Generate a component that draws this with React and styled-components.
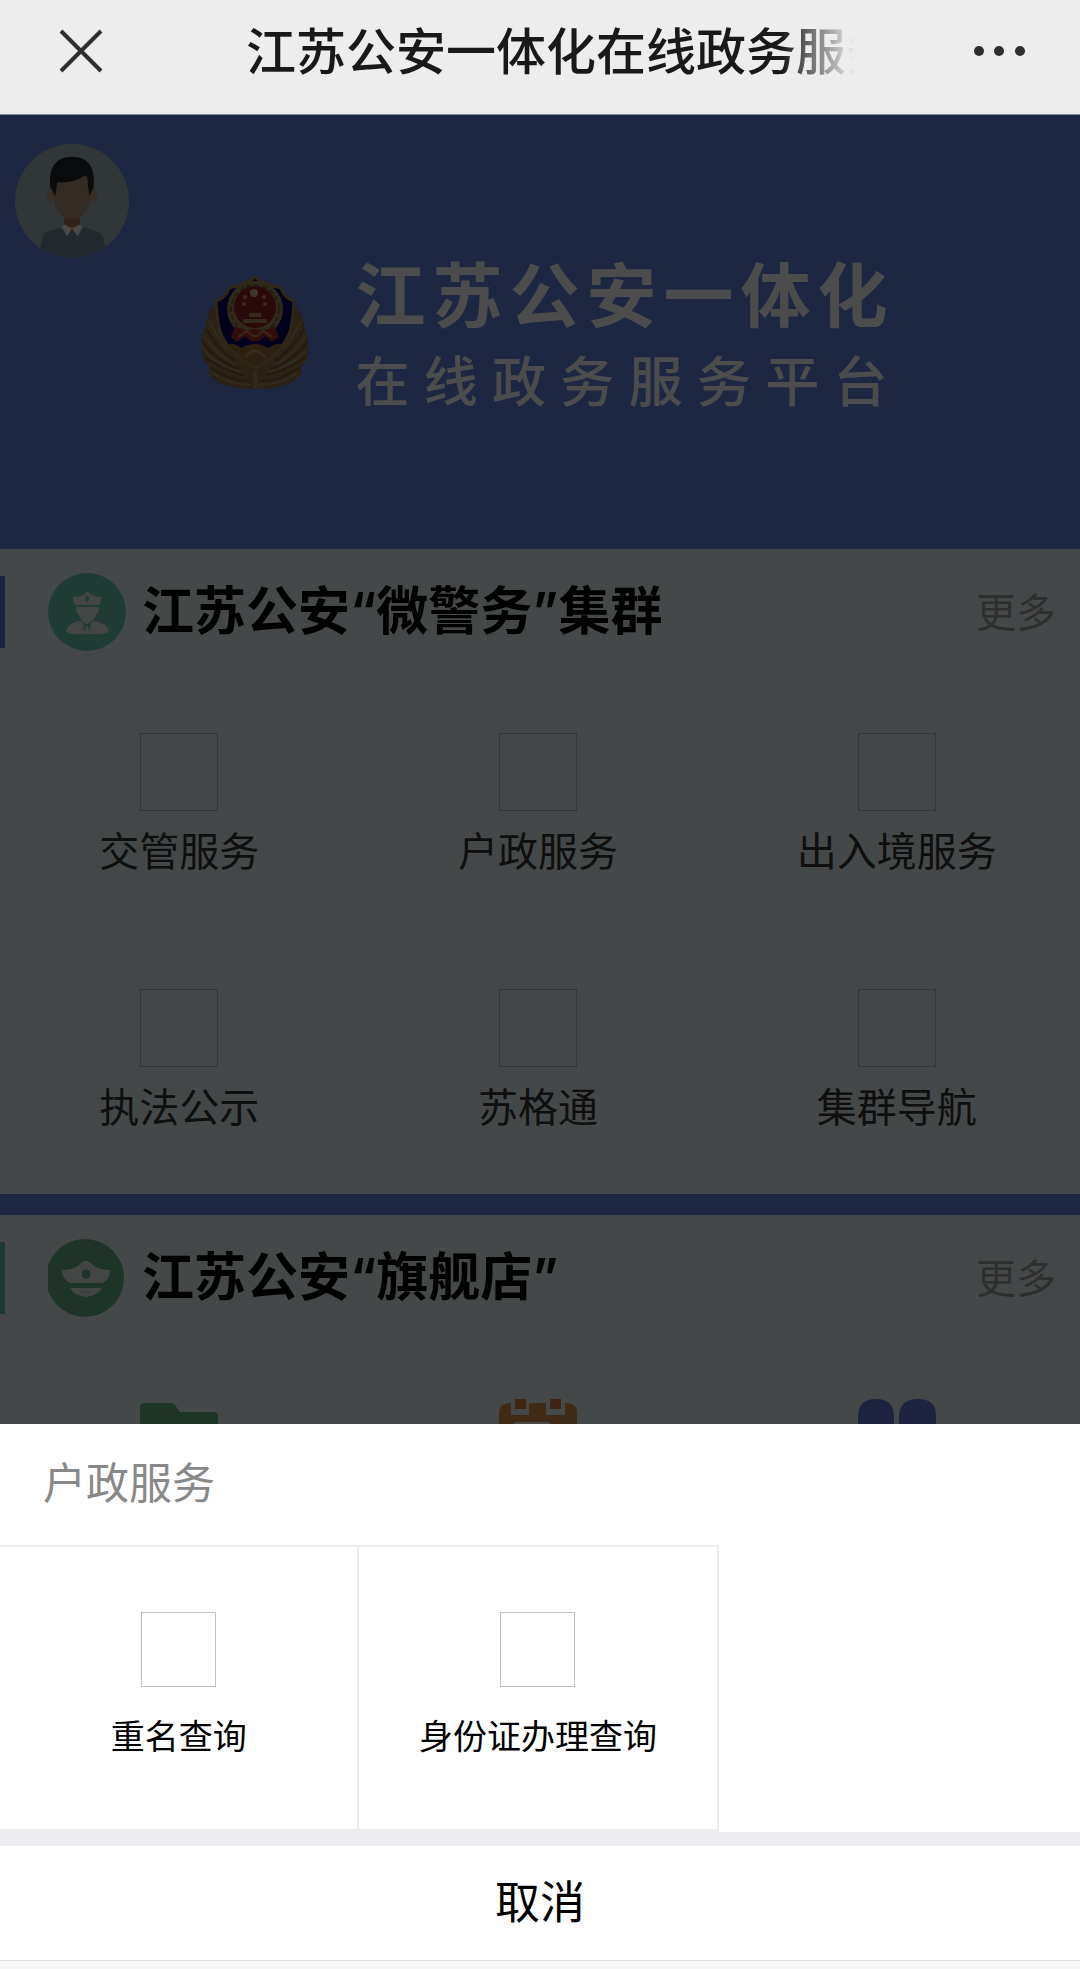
import styled, { createGlobalStyle } from "styled-components";

const clusterItems = ["交管服务", "户政服务", "出入境服务", "执法公示", "苏格通", "集群导航"];

const sheetItems = ["重名查询", "身份证办理查询"];

const CloseIcon = () => (
  <svg width="44" height="44" viewBox="0 0 44 44" fill="none" stroke="#2e2e2e" strokeWidth="4">
    <path d="M2 2 42 42M42 2 2 42" />
  </svg>
);

const DotsIcon = () => (
  <svg width="52" height="12" viewBox="0 0 52 12" fill="#2e2e2e">
    <circle cx="5" cy="6" r="5" />
    <circle cx="25" cy="6" r="5" />
    <circle cx="46" cy="6" r="5" />
  </svg>
);

const AvatarIcon = () => (
  <svg width="116" height="116" viewBox="-1 -1 118 118">
    <defs>
      <clipPath id="avatarClip">
        <circle cx="58" cy="58" r="58" />
      </clipPath>
    </defs>
    <g clipPath="url(#avatarClip)">
      <rect width="116" height="116" fill="#a6b4c0" />
      <path d="M24 116 28 94Q30 89 37 88L50 84H66L81 88Q88 90 90 96L94 116Z" fill="#70889a" />
      <path d="M50 72H66V85L58 90 50 85Z" fill="#a87555" />
      <ellipse cx="37" cy="51" rx="5" ry="8" fill="#b89e86" />
      <ellipse cx="79" cy="51" rx="5" ry="8" fill="#b89e86" />
      <path d="M39 30H77V56Q76 66 69 72 58 81 47 72 40 66 39 56Z" fill="#b0937a" />
      <path d="M36 44C34 26 40 13 58 13S82 26 80 44L76 53 74 42Q75 33 71 32 60 40 43 39L41 53Z" fill="#20262b" />
      <path d="M50 82 58 86 53 94 47 84ZM66 82 58 86 64 94 69 84Z" fill="#f2f2f2" />
    </g>
  </svg>
);

const PoliceEmblem = () => (
  <svg width="108" height="115" viewBox="0 0 108 115">
    <path
      d="M14 30C6 36 6 44 4 52 0 60 0 70 1 78 2 86 6 90 9 92 6 96 8 100 12 104 24 112 38 114 54 114S86 112 96 104C101 100 102 96 99 92 104 90 107 84 107 76 108 66 106 58 103 50 102 42 99 35 92 30L54 2Z"
      fill="#8f7348"
    />
    <g fill="none" stroke="#6c5438" strokeWidth="2">
      <path d="M5 54Q16 74 34 86M2 68Q16 86 38 94M4 82Q20 94 42 100M9 92Q28 106 48 106" />
      <path d="M103 54Q92 74 74 86M106 68Q92 86 70 94M104 82Q88 94 66 100M99 92Q80 106 60 106" />
    </g>
    <g fill="none" stroke="#a88c5e" strokeWidth="2">
      <path d="M8 46Q16 62 26 74M3 61Q16 80 34 90M3 76Q18 92 40 97M12 98Q28 110 50 110" />
      <path d="M100 46Q92 62 82 74M105 61Q92 80 74 90M105 76Q90 92 68 97M96 98Q80 110 58 110" />
      <path d="M54 96V113" strokeWidth="4" />
    </g>
    <path
      d="M54 2C62 9 72 11 80 13 82 20 87 24 93 26 92 38 92 50 88 59 82 74 68 84 54 93 40 84 26 74 20 59 16 50 16 38 15 26 21 24 26 20 28 13 36 11 46 9 54 2Z"
      fill="#00005e"
      stroke="#a08250"
      strokeWidth="3"
    />
    <path
      d="M26 69Q34 68 40 73 48 69 54 69 60 69 68 73 74 68 82 69 72 81 54 92 36 81 26 69Z"
      fill="#8f6c3c"
    />
    <path d="M44 82Q54 70 64 82" fill="none" stroke="#b89258" strokeWidth="3" />
    <circle cx="54" cy="34" r="28" fill="#9c8a58" />
    <circle cx="54" cy="34" r="24" fill="none" stroke="#726036" strokeWidth="2" strokeDasharray="5 3" />
    <circle cx="54" cy="32" r="21" fill="#8c1f26" />
    <path
      d="M34 51Q44 57 54 54 64 57 74 51L78 62 71 67 64 61 58 66H50L44 61 36 67 30 62Z"
      fill="#a02c22"
    />
    <path d="M37 62 46 56 52 61 56 61 62 56 71 62" fill="none" stroke="#b08a50" strokeWidth="2" />
    <path d="M42 44H66V48H42ZM48 38H60V42H48Z" fill="#a09058" />
    <circle cx="53" cy="18" r="4" fill="#d0b890" />
    <circle cx="44" cy="22" r="2" fill="#c09878" />
    <circle cx="63" cy="22" r="2" fill="#c09878" />
    <circle cx="43" cy="29" r="2" fill="#c09878" />
    <circle cx="64" cy="29" r="2" fill="#c09878" />
  </svg>
);

const OfficerIcon = () => (
  <svg width="78" height="78" viewBox="0 0 78 78">
    <circle cx="39" cy="39" r="39" fill="#6cc4b0" />
    <path
      d="M39 18Q42 22 46 23 50 24 53 24 54 27 51 32H28Q24 28 25 24 29 24 33 23 37 22 39 18ZM28 34H51Q51 40 48 42 46 48 40 51H38Q32 47 31 42 28 40 28 34Z"
      fill="#e4e6e8"
    />
    <path d="M39 22Q42 25 41 27L39 29 37 27Q36 25 39 22Z" fill="#6cc4b0" />
    <path d="M18 59C19 52 26 48 33 48L39 54 45 48C53 48 60 52 61 59Q54 62 47 61H32Q24 62 18 59Z" fill="#e4e6e8" />
    <path d="M35 49 39 52 43 49 42 57 39 61 36 57Z" fill="#6cc4b0" />
    <path d="M38 53H40L41 59 39 61 37 59Z" fill="#e4e6e8" />
  </svg>
);

const CapIcon = () => (
  <svg width="78" height="78" viewBox="0 0 78 78">
    <circle cx="37" cy="39" r="39" fill="#65b088" />
    <path
      d="M14 31Q24 31 30 27C34 23 36 22 38 22S42 23 46 27Q52 31 62 31C62 37 59 42 54 44H22C17 42 14 37 14 31Z"
      fill="#e4e6e8"
    />
    <path d="M38 30 42 32V37Q42 39 38 40 34 39 34 37V32Z" fill="#65b088" />
    <path d="M22 49H54Q49 57 38 58 27 57 22 49Z" fill="#e4e6e8" />
    <path d="M32 53 35 54 38 52 41 54 44 52" fill="none" stroke="#9ccfb8" strokeWidth="1" />
  </svg>
);

const FolderIcon = () => (
  <svg width="78" height="78" viewBox="0 0 78 78">
    <path d="M0 9Q0 4 5 4H31Q35 4 37 9L40 13H73Q78 13 78 18V72H0Z" fill="#65b080" />
  </svg>
);

const CalendarIcon = () => (
  <svg width="78" height="78" viewBox="0 0 78 78">
    <path d="M12 4V16H30V4H47V16H66V4Q78 4 78 13V78H0V13Q0 4 12 4Z" fill="#d08c48" />
    <path d="M16 0H27V10H16ZM51 0H62V10H51Z" fill="#d08040" />
    <rect x="14" y="23" width="38" height="42" rx="4" fill="#e6f0f3" />
  </svg>
);

const AppsIcon = () => (
  <svg width="78" height="78" viewBox="0 0 78 78" fill="#6578d4">
    <path d="M0 37V18Q0 0 18 0T36 18V37ZM41 37V18Q41 0 60 0T78 18V37Z" />
    <path d="M0 41H36V60Q36 78 18 78T0 60ZM41 41H78V60Q78 78 60 78T41 60Z" />
  </svg>
);

const App = () => {
  return (
    <Screen>
      <GlobalStyle />

      <NavBar>
        <CloseButton aria-label="关闭">
          <CloseIcon />
        </CloseButton>
        <NavTitle>江苏公安一体化在线政务服务</NavTitle>
        <IconButton aria-label="菜单">
          <DotsIcon />
        </IconButton>
      </NavBar>

      <Content>
        <Banner>
          <Avatar aria-label="个人中心">
            <AvatarIcon />
          </Avatar>
          <Brand>
            <PoliceEmblem />
            <BrandText>
              <BrandName>江苏公安一体化</BrandName>
              <BrandSub>在线政务服务平台</BrandSub>
            </BrandText>
          </Brand>
        </Banner>

        <Section>
          <SectionHead $accent="#5b70d8">
            <OfficerIcon />
            <SectionTitle>江苏公安“微警务”集群</SectionTitle>
            <MoreLink href="#cluster">更多</MoreLink>
          </SectionHead>
          <TileGrid>
            {clusterItems.map((name) => (
              <Tile key={name}>
                <EmptyImage />
                {name}
              </Tile>
            ))}
          </TileGrid>
        </Section>

        <Section>
          <SectionHead $accent="#64b8a8">
            <CapIcon />
            <SectionTitle>江苏公安“旗舰店”</SectionTitle>
            <MoreLink href="#store">更多</MoreLink>
          </SectionHead>
          <TileGrid>
            <Tile aria-label="文件">
              <FolderIcon />
            </Tile>
            <Tile aria-label="预约">
              <CalendarIcon />
            </Tile>
            <Tile aria-label="应用">
              <AppsIcon />
            </Tile>
          </TileGrid>
        </Section>
        <Mask />
      </Content>

      <Sheet>
        <SheetTitle>户政服务</SheetTitle>
        <SheetGrid>
          {sheetItems.map((name) => (
            <SheetItem key={name}>
              <SheetImage />
              {name}
            </SheetItem>
          ))}
        </SheetGrid>
        <CancelButton>取消</CancelButton>
        <SafeArea />
      </Sheet>
    </Screen>
  );
};

export default App;

const GlobalStyle = createGlobalStyle`
  * {
    box-sizing: border-box;
  }

  body {
    margin: 0;
    font-family: "Noto Sans CJK SC", sans-serif;
  }

  button {
    border: none;
    padding: 0;
    background: none;
    font-family: inherit;
    cursor: pointer;
  }

  svg {
    display: block;
    flex-shrink: 0;
  }

  h1, h2, h3, p {
    margin: 0;
  }
`;

const Screen = styled.div`
  display: flex;
  flex-direction: column;
  height: 100vh;
  overflow: hidden;
`;

const NavBar = styled.header`
  display: flex;
  align-items: center;
  justify-content: space-between;
  flex-shrink: 0;
  height: 115px;
  padding: 0 54px 12px 59px;
  background-color: #ededed;
  border-bottom: 1px solid #858998;
`;

const IconButton = styled.button`
  display: flex;
  align-items: center;
`;

const CloseButton = styled(IconButton)`
  padding-right: 24px;
`;

const NavTitle = styled.h1`
  width: 63%;
  padding-bottom: 6px;
  overflow: hidden;
  white-space: nowrap;
  font-size: 50px;
  font-weight: 500;
  line-height: 72px;
  color: #191919;
  mask-image: linear-gradient(to right, #000 88%, transparent 100%);
`;

const Content = styled.main`
  position: relative;
  flex: 1;
  min-height: 0;
  overflow: hidden;
  background-color: #6182dc;
`;

const Mask = styled.div`
  position: absolute;
  inset: 0;
  background-color: rgba(0, 0, 0, 0.7);
`;

const Banner = styled.div`
  height: 434px;
  padding: 28px 14px;
`;

const Avatar = styled.button`
  display: block;
`;

const Brand = styled.div`
  display: flex;
  align-items: center;
  justify-content: center;
  gap: 47px;
  margin-top: -14px;
  padding-left: 8px;
`;

const BrandText = styled.div`
  width: 532px;
  color: #fff;
  text-align-last: justify;
`;

const BrandName = styled.h2`
  font-size: 70px;
  font-weight: 700;
  line-height: 94px;
`;

const BrandSub = styled.p`
  font-size: 54px;
  font-weight: 500;
  line-height: 80px;
`;

const Section = styled.section`
  padding-bottom: 7px;
  background-color: #e6f0f3;

  & + & {
    margin-top: 21px;
  }
`;

const SectionHead = styled.div`
  display: flex;
  align-items: center;
  height: 126px;
  padding-right: 24px;

  &::before {
    content: "";
    width: 5px;
    height: 72px;
    margin-right: 43px;
    background-color: ${({ $accent }) => $accent};
  }
`;

const SectionTitle = styled.h2`
  flex: 1;
  margin-left: 16px;
  font-family: Inter, "Noto Sans CJK SC", sans-serif;
  font-size: 52px;
  font-weight: 600;
  line-height: 72px;
  color: #000;
`;

const MoreLink = styled.a`
  padding-bottom: 4px;
  font-size: 40px;
  line-height: 56px;
  color: #999;
  text-decoration: none;
`;

const TileGrid = styled.div`
  display: grid;
  grid-template-columns: repeat(3, 1fr);
  padding-right: 4px;
`;

const Tile = styled.button`
  display: flex;
  flex-direction: column;
  align-items: center;
  gap: 12px;
  height: 256px;
  padding-top: 58px;
  font-size: 40px;
  line-height: 52px;
  color: #333;
`;

const EmptyImage = styled.span`
  width: 78px;
  height: 78px;
  border: 1px solid #b0b7ba;
`;

const Sheet = styled.section`
  flex-shrink: 0;
  background-color: #fff;
`;

const SheetTitle = styled.h3`
  padding: 20px 43px 29px;
  font-size: 43px;
  font-weight: 400;
  line-height: 72px;
  color: #888;
`;

const SheetGrid = styled.div`
  display: grid;
  grid-template-columns: repeat(3, 1fr);
  padding-right: 2px;
  border-bottom: 14px solid #ededf1;
`;

const SheetItem = styled.button`
  display: flex;
  flex-direction: column;
  align-items: center;
  gap: 24px;
  padding: 65px 0 70px;
  border: solid #ededf0;
  border-width: 2px 2px 3px 0;
  font-size: 34px;
  line-height: 48px;
  color: #000;
`;

const SheetImage = styled(EmptyImage)`
  width: 75px;
  height: 75px;
  border-color: #c0c0c0;
`;

const CancelButton = styled.button`
  display: block;
  width: 100%;
  height: 114px;
  padding-bottom: 8px;
  font-size: 45px;
  color: #000;
`;

const SafeArea = styled.div`
  height: 9px;
  border-top: 1px solid #dedede;
  background-color: #f7f7f7;
`;
